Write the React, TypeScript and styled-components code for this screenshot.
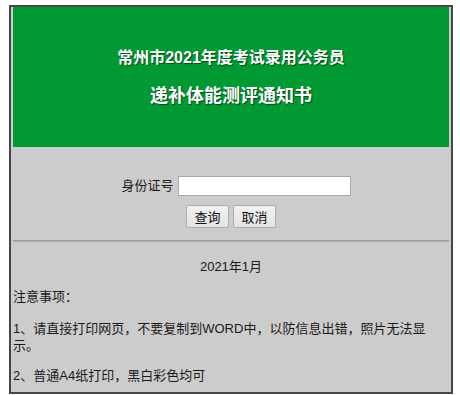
import styled, { createGlobalStyle } from "styled-components";

const GlobalStyle = createGlobalStyle`
  html, body {
    margin: 0;
    padding: 0;
    background: #ffffff;
  }
  body {
    font-family: "Liberation Sans", "Noto Sans CJK SC", sans-serif;
    font-size: 13px;
    color: #1a1a1a;
  }
`;

const Frame = styled.div`
  box-sizing: border-box;
  width: 444px;
  height: 389px;
  margin: 5px 0 0 9px;
  padding: 0 2px;
  border: 2px solid #464646;
  background: #cccccc;
  overflow: hidden;
`;

const Banner = styled.header`
  height: 140px;
  background: #009933;
  color: #ffffff;
  display: flex;
  flex-direction: column;
  align-items: center;
  padding-top: 41px;
  box-sizing: border-box;
  font-weight: bold;
  text-shadow: 1px 1px 1px rgba(0, 40, 10, 0.7);
`;

const Title = styled.div<{ size: number; lh: number; gap?: number }>`
  font-size: ${(p) => p.size}px;
  line-height: ${(p) => p.lh}px;
  margin-top: ${(p) => p.gap ?? 0}px;
`;

const Form = styled.form`
  display: flex;
  flex-direction: column;
  align-items: center;
  padding-top: 29px;
`;

const Field = styled.label`
  display: flex;
  align-items: center;
  gap: 4px;
  margin-left: 10px;
  line-height: 20px;
`;

const Input = styled.input`
  box-sizing: border-box;
  width: 173px;
  height: 20px;
  border: 1px solid #a9a9a9;
  background: #fff;
  padding: 0 3px;
  font: inherit;
`;

const Buttons = styled.div`
  display: flex;
  gap: 4px;
  margin-top: 9px;
`;

const Button = styled.button`
  box-sizing: border-box;
  width: 43px;
  height: 23px;
  padding: 0;
  border: 1px solid #adadad;
  border-radius: 2px;
  background: linear-gradient(#f2f2f2, #e3e3e3);
  font: inherit;
  color: #111;
`;

const Rule = styled.hr`
  margin: 12px 0 0;
  height: 0;
  border: 0;
  border-top: 1px solid #9a9a9a;
  border-bottom: 1px solid #b4b4b4;
`;

const DateLine = styled.div`
  text-align: center;
  line-height: 17px;
  margin-top: 16px;
`;

const Note = styled.p<{ gap: number }>`
  margin: ${(p) => p.gap}px 0 0;
  line-height: 17px;
`;

export default function App() {
  return (
    <>
      <GlobalStyle />
      <Frame>
        <Banner>
          <Title size={16} lh={20}>
            常州市2021年度考试录用公务员
          </Title>
          <Title size={18} lh={24} gap={16}>
            递补体能测评通知书
          </Title>
        </Banner>
        <Form onSubmit={(e) => e.preventDefault()}>
          <Field>
            身份证号
            <Input type="text" />
          </Field>
          <Buttons>
            <Button type="submit">查询</Button>
            <Button type="reset">取消</Button>
          </Buttons>
        </Form>
        <Rule />
        <DateLine>2021年1月</DateLine>
        <Note gap={13}>注意事项：</Note>
        <Note gap={15}>
          1、请直接打印网页，不要复制到WORD中，以防信息出错，照片无法显示。
        </Note>
        <Note gap={13}>2、普通A4纸打印，黑白彩色均可</Note>
      </Frame>
    </>
  );
}
